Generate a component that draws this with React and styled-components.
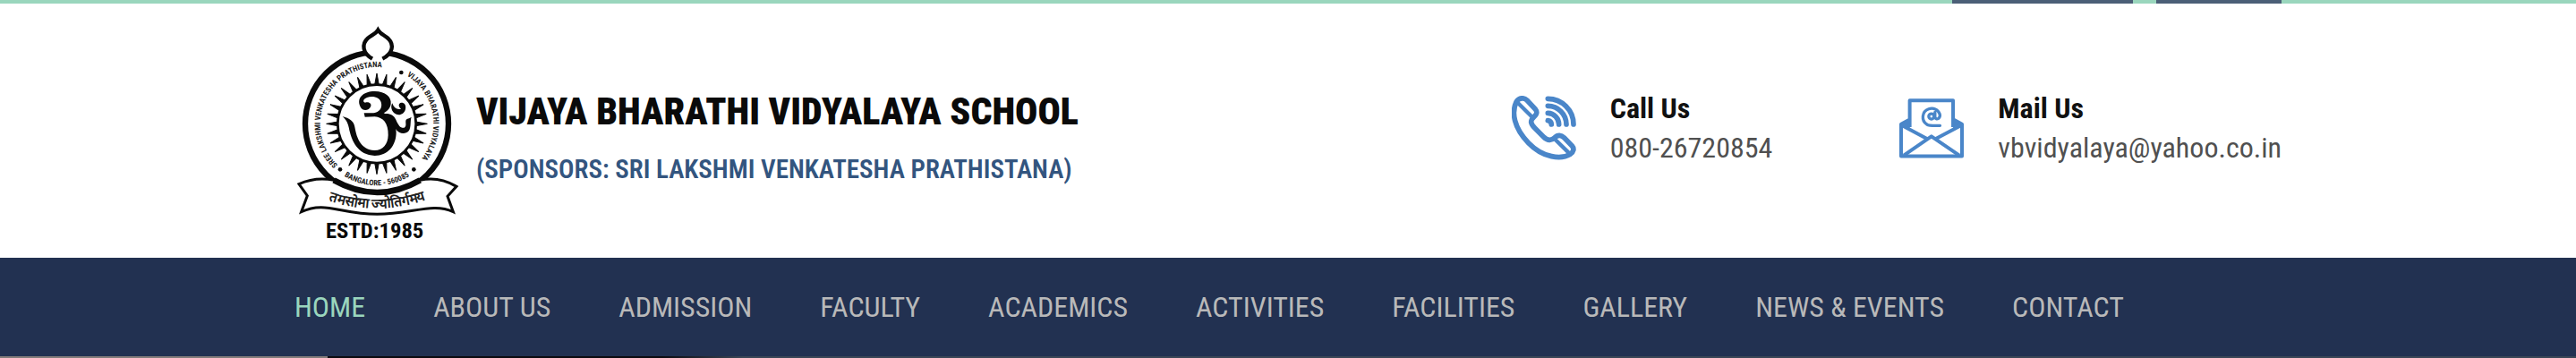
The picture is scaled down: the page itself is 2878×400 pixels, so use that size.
import React from "react";
import styled, { createGlobalStyle } from "styled-components";

const GlobalStyle = createGlobalStyle`
  *, *::before, *::after { box-sizing: border-box; }
  body {
    margin: 0;
    background: #fff;
    font-family: "Roboto Condensed", "Liberation Sans Narrow", Roboto, sans-serif;
    font-size: 32px;
    line-height: 44px;
  }
`;

const Container = styled.div`
  max-width: 2280px;
  margin: 0 auto;
  padding: 0 30px;
`;

const TopBar = styled.div`
  background: #9ad6bd;
`;

const TopBarTabs = styled(Container)`
  display: flex;
  justify-content: flex-end;
  gap: 26px;
`;

const Tab = styled.span`
  width: ${(p) => p.$width}px;
  height: 4px;
  background: #4b5f77;
`;

const Masthead = styled(Container)`
  display: flex;
  align-items: center;
  justify-content: space-between;
  height: 284px;
`;

const Brand = styled.a`
  display: flex;
  align-items: center;
  gap: 20px;
  color: inherit;
  text-decoration: none;
`;

const EmblemSvg = styled.svg`
  flex: none;
  overflow: visible;
`;

const BrandText = styled.div`
  display: flex;
  flex-direction: column;
  gap: 12px;
  padding-top: 22px;
`;

const SchoolName = styled.h1`
  margin: 0;
  color: #0a0a0a;
  font-size: 42px;
  line-height: 52px;
  font-weight: 900;
  white-space: nowrap;
`;

const Sponsors = styled.p`
  margin: 0;
  color: #33557f;
  font-size: 29px;
  line-height: 52px;
  font-weight: 600;
  white-space: nowrap;
`;

const Contacts = styled.address`
  display: flex;
  gap: 142px;
  padding-bottom: 6px;
  font-style: normal;
`;

const Contact = styled.div`
  display: flex;
  align-items: center;
  gap: 38px;
`;

const ContactLabel = styled.div`
  color: #111;
  font-weight: 700;
`;

const ContactLink = styled.a`
  display: block;
  color: #505050;
  text-decoration: none;
`;

const Nav = styled.nav`
  background: #223151;
`;

const Menu = styled.ul`
  display: flex;
  gap: 76px;
  margin: 0;
  padding: 0;
  list-style: none;
`;

const MenuLink = styled.a`
  display: block;
  padding: 33px 0;
  color: ${(p) => (p.$active ? "#9ad6bd" : "#b9b9b9")};
  text-decoration: none;
  white-space: nowrap;
`;

const Slider = styled.div`
  height: 2px;
  background: linear-gradient(90deg, #827c7a 0 366px, #0c0b10 366px 740px, #3a4656 830px);
`;

const RAYS = Array.from({ length: 32 }, (_, i) => i * 11.25);

function Emblem() {
  return (
    <EmblemSvg width="183" height="248" viewBox="57 6 549 744" role="img" aria-label="School emblem">
      <defs>
        <path id="ring" d="M333 545a190 190 0 0 1 0-380a190 190 0 0 1 0 380" />
        <path id="ringBottom" d="M126 355a207 207 0 0 0 414 0" />
        <path id="ribbonText" d="M146 602Q335 676 524 598" />
      </defs>
      <circle cx="333" cy="355" r="240" fill="#fff" stroke="#0a0a0a" strokeWidth="19" />
      <path
        d="M318 137C285 118 281 88 303 68C318 56 330 53 337 41C344 53 357 57 371 69C392 90 387 120 352 137"
        fill="#fff"
        stroke="#0a0a0a"
        strokeWidth="13"
      />
      <g fill="#222" fontSize="26" fontWeight="700">
        <text><textPath href="#ring" startOffset="144">SREE LAKSHMI VENKATESHA PRATHISTANA</textPath></text>
        <text><textPath href="#ring" startOffset="702">VIJAYA BHARATHI VIDYALAYA</textPath></text>
        <text textAnchor="middle"><textPath href="#ringBottom" startOffset="50%">BANGALORE - 560085</textPath></text>
      </g>
      <g fill="#0a0a0a">
        <circle cx="415" cy="183" r="7" />
        <circle cx="210" cy="508" r="7" />
        <circle cx="457" cy="508" r="7" />
        {RAYS.map((a) => (
          <path key={a} d="M326 224L333 186L340 224z" transform={`rotate(${a} 333 355)`} stroke="#0a0a0a" strokeWidth="3" />
        ))}
      </g>
      <circle cx="333" cy="355" r="131" fill="#fff" stroke="#0a0a0a" strokeWidth="8" />
      <g fill="#0a0a0a">
        <path d="M281 303C260 270 287 246 326 246C362 246 383 266 380 288C378 304 368 312 356 319C385 330 398 355 398 385C397 430 369 462 326 462C270 460 248 414 239 367C235 348 228 340 218 330C242 337 255 345 259 365C266 407 282 441 324 444C353 445 370 424 371 393C372 353 354 333 326 331L293 332L290 319L322 319C342 316 351 303 348 286C344 267 321 260 300 267C287 272 285 282 294 284C304 280 316 286 313 296C308 310 289 313 281 303z" />
        <path d="M356 321C379 319 390 326 397 341C406 362 414 371 425 368C435 361 427 350 431 341C437 336 445 336 449 332C444 346 449 366 440 379C428 392 407 389 396 372C386 352 377 339 359 333z" />
        <path d="M385 286C390 302 402 309 414 305C404 296 405 286 415 284C426 284 432 292 429 306C424 325 405 330 391 319C381 310 379 296 385 286z" />
      </g>
      <path
        d="M72 557Q128 532 189 544Q335 626 478 544Q540 530 600 565L570 598L589 650C520 618 450 658 334 658C210 658 160 612 80 650L100 596z"
        fill="#fff"
        stroke="#0a0a0a"
        strokeWidth="9"
      />
      <path d="M189 544Q335 626 478 544" fill="none" stroke="#0a0a0a" strokeWidth="20" />
      <text fill="#222" fontSize="46" fontWeight="700" textAnchor="middle">
        <textPath href="#ribbonText" startOffset="50%">तमसोमा ज्योतिर्गमय</textPath>
      </text>
      <text x="326" y="738" fill="#0a0a0a" fontSize="74" fontWeight="700" textAnchor="middle">ESTD:1985</text>
    </EmblemSvg>
  );
}

function PhoneIcon() {
  return (
    <svg width="72" height="72" viewBox="52 52 216 216" fill="none" stroke="#4a86c9" strokeWidth="17" strokeLinecap="round" strokeLinejoin="round" aria-hidden="true">
      <path d="M67 73C76 58 93 57 103 67L131 97C138 106 137 113 127 122C112 136 115 146 129 160L158 189C173 204 186 202 195 193C206 182 218 183 228 193L254 220C262 229 260 239 248 248C218 266 157 261 108 210C58 158 51 108 67 73z" />
      <path d="M75 78L121 124M198 199L242 242" strokeWidth="13" />
      <path d="M173 62A86 86 0 0 1 259 148M173 86A62 62 0 0 1 235 148M173 110A38 38 0 0 1 210 148M173 135A14 14 0 0 1 185 148" />
    </svg>
  );
}

function MailIcon() {
  return (
    <svg width="72" height="68" viewBox="67 60 217 202" fill="none" stroke="#4a86c9" strokeWidth="12" strokeLinejoin="round" aria-hidden="true">
      <path d="M102 158V68H248V158M102 132L73 148V256H278V148L248 132" />
      <path d="M73 146L102 130V162zM278 146L248 130V162z" fill="#4a86c9" stroke="none" />
      <path d="M74 151L160 197M277 151L190 197M82 253L175 189L269 253" />
      <g strokeWidth="10" strokeLinecap="round">
        <circle cx="175" cy="122" r="9" />
        <path d="M187 108V124Q190 134 199 129Q206 122 203 114C197 98 181 92 166 97C142 105 140 137 160 149C169 155 188 153 204 153" />
      </g>
    </svg>
  );
}

const MENU = [
  "HOME",
  "ABOUT US",
  "ADMISSION",
  "FACULTY",
  "ACADEMICS",
  "ACTIVITIES",
  "FACILITIES",
  "GALLERY",
  "NEWS & EVENTS",
  "CONTACT",
];

export default function App() {
  return (
    <>
      <GlobalStyle />
      <header>
        <TopBar>
          <TopBarTabs>
            <Tab $width={202} />
            <Tab $width={140} />
          </TopBarTabs>
        </TopBar>
        <Masthead>
          <Brand href="#home">
            <Emblem />
            <BrandText>
              <SchoolName>VIJAYA BHARATHI VIDYALAYA SCHOOL</SchoolName>
              <Sponsors>(SPONSORS: SRI LAKSHMI VENKATESHA PRATHISTANA)</Sponsors>
            </BrandText>
          </Brand>
          <Contacts>
            <Contact>
              <PhoneIcon />
              <div>
                <ContactLabel>Call Us</ContactLabel>
                <ContactLink href="tel:08026720854">080-26720854</ContactLink>
              </div>
            </Contact>
            <Contact>
              <MailIcon />
              <div>
                <ContactLabel>Mail Us</ContactLabel>
                <ContactLink href="mailto:vbvidyalaya@yahoo.co.in">vbvidyalaya@yahoo.co.in</ContactLink>
              </div>
            </Contact>
          </Contacts>
        </Masthead>
        <Nav>
          <Container>
            <Menu>
              {MENU.map((item, i) => (
                <li key={item}>
                  <MenuLink href="#" $active={i === 0}>{item}</MenuLink>
                </li>
              ))}
            </Menu>
          </Container>
        </Nav>
      </header>
      <Slider />
    </>
  );
}
